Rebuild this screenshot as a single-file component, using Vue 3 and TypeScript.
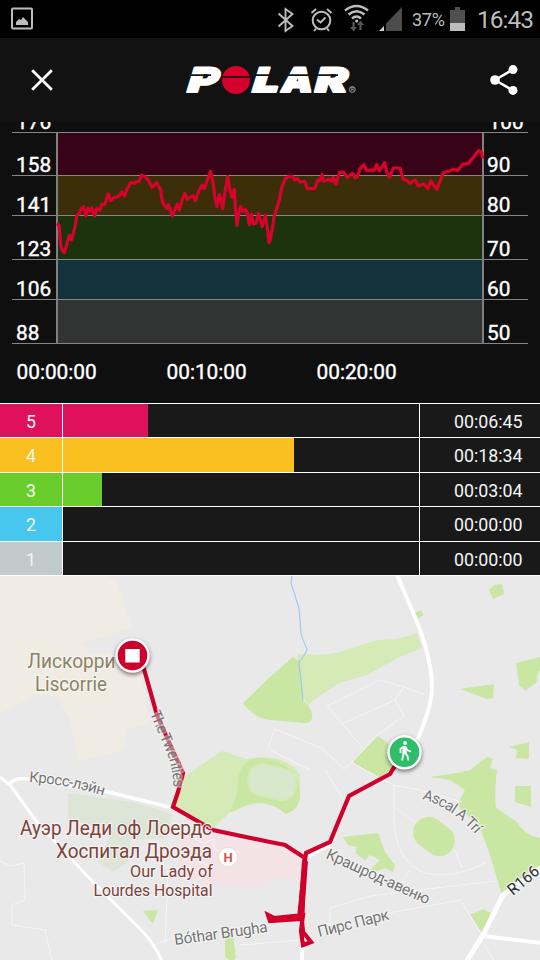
<template>
    <div class="screen">
        <div class="status">
            <svg class="status__icon" width="22" height="24" viewBox="0 0 22 24" fill="none">
                <rect x="1" y="1.500" width="20" height="20" rx="1" stroke="#bdbdbd" stroke-width="2" />
                <path d="M5 18v-3l3-3 2 1 2-3 2 2 3 3v3z" fill="#bdbdbd" />
            </svg>
            <svg class="status__tray" width="140" height="38" viewBox="270 0 140 38" fill="none" stroke="#bdbdbd">
                <path d="M278.500 13.500l14 12.500-7 5V9l7 5-14 12.500" stroke-width="1.900" />
                <circle cx="321.500" cy="20.500" r="8.800" stroke-width="2" />
                <path d="M317 19.500l3.500 3 5-5M311.500 13l4.500-4M331.500 13L327 9M316 28.500l-2 2.500M327 28.500l2 2.500" stroke-width="1.900" />
                <path d="M345 10.500q11.500-9 23 0M348.500 14.500q8-6.500 16 0M352 18.500q4.500-4 9 0" stroke-width="2.500" />
                <circle cx="356.700" cy="21" r="1.600" fill="#bdbdbd" stroke="none" />
                <path d="M353.500 22v6M360.500 24v6" stroke="#565656" stroke-width="2.200" />
                <path d="M350 27h7l-3.500 4.500zM357 25h7l-3.500-4.500z" fill="#565656" stroke="none" />
                <path d="M386 23.500L402 7v24h-16z" fill="#4c4c4c" stroke="none" />
                <path d="M379 31l5-5v5z" fill="#d0d0d0" stroke="none" />
            </svg>
            <span class="status__percent">37%</span>
            <svg class="status__battery" width="15" height="24" viewBox="0 0 15 24">
                <path d="M0 3h5V0h5v3h5v13H0z" fill="#4f4f4f" />
                <path d="M0 16h15v8H0z" fill="#bdbdbd" />
            </svg>
            <span class="status__clock">16:43</span>
        </div>

        <header class="header">
            <svg width="22" height="22" viewBox="0 0 22 22" fill="none" stroke="#fff" stroke-width="2.800">
                <path d="M1.200 1.200l19.600 19.600M20.800 1.200L1.200 20.800" />
            </svg>
            <svg class="header__logo" width="174" height="34" viewBox="184 63 174 34">
                <g class="header__brand">
                    <text transform="translate(185.500 92) skewX(-17)" textLength="30" lengthAdjust="spacingAndGlyphs">P</text>
                    <text transform="translate(250.500 92) skewX(-17)" textLength="26" lengthAdjust="spacingAndGlyphs">L</text>
                    <text transform="translate(280 92) skewX(-10)" textLength="31" lengthAdjust="spacingAndGlyphs">A</text>
                    <text transform="translate(313 92) skewX(-15)" textLength="32" lengthAdjust="spacingAndGlyphs">R</text>
                </g>
                <circle cx="236" cy="80" r="14" fill="#d5002b" />
                <path d="M187 75.200h24M221 77h30M251 75.200h24M288 75.200h22M316 75.200h22" stroke="#121212" stroke-width="1.700" />
                <circle cx="352.300" cy="89.500" r="2.900" fill="none" stroke="#bbb" stroke-width=".8" />
                <text x="352.300" y="91.300" class="header__reg">R</text>
            </svg>
            <svg width="28" height="30" viewBox="0 0 28 30" fill="#fff">
                <path d="M23 4.500L5 15l18 10.500" fill="none" stroke="#fff" stroke-width="2.400" />
                <circle cx="5" cy="15" r="4.800" />
                <circle cx="23" cy="4.600" r="4.500" />
                <circle cx="23" cy="25.400" r="4.500" />
            </svg>
        </header>

        <svg class="chart" width="540" height="281" viewBox="0 122 540 281">
            <rect
                v-for="band in bands"
                :key="band.color"
                x="57"
                :y="band.y"
                width="426"
                :height="band.height"
                :fill="band.color"
            />
            <path v-for="tick in ticks" :key="tick.y" :d="`M12 ${tick.y + 0.5}H528`" stroke="#868686" />
            <path d="M57 132V344M483 132V344" stroke="#808080" stroke-width="2" />
            <g v-for="tick in ticks" :key="tick.bpm">
                <text x="16" :y="tick.y - 3.5">{{ tick.bpm }}</text>
                <text :x="tick.percent === 100 ? 488.5 : 487" :y="tick.y - 3.5">{{ tick.percent }}</text>
            </g>
            <text v-for="(time, i) in times" :key="time" :x="16.5 + i * 150" y="378.700">{{ time }}</text>
            <!-- heart rate samples are stored at a third of a pixel -->
            <polyline
                transform="translate(0 110) scale(.33333)"
                :points="heartRate"
                fill="none"
                stroke="#d8032d"
                stroke-width="9.500"
                stroke-linejoin="round"
            />
        </svg>

        <div class="zones">
            <div v-for="zone in zones" :key="zone.level" class="zone" :style="{ height: zone.height + 'px' }">
                <div class="zone__level" :style="{ background: zone.color }">{{ zone.level }}</div>
                <div class="zone__track">
                    <div class="zone__bar" :style="{ width: zone.width + 'px', background: zone.color }"></div>
                </div>
                <div class="zone__time">{{ zone.time }}</div>
            </div>
        </div>

        <svg class="map" width="540" height="385" viewBox="0 576 540 384">
            <path d="M0 575H104L116 580L133 628L83 643L90 655L138 650L143 683L150 723L127 730L123 750L78 762L70 720L57 697L37 695L0 713Z" fill="#f0ece4" />
            <path d="M68 793L133 802L172 814L167 838L130 840L128 862L113 872L98 862L112 832L68 818Z" fill="#dde5d6" />
            <path d="M180 836L213 832L270 843L304 858L301 878L270 878L263 888L213 885L178 878Z" fill="#f3e2e6" />
            <path d="M298 654Q325 656 340 652L377 640L397 639L417 633L422 648L397 658L367 675L343 682Q325 690 308 705L299 690Z" fill="#d5eab6" />
            <path d="M184 777L222 751L246 759L262 757Q290 758 300 775V800L285 812L230 812L213 829L175 807L178 792Z" fill="#d5eab6" />
            <path d="M230 812Q240 790 238 777Q245 752 272 760Q301 769 300 795Q299 812 284 814Q270 798 246 805Z" fill="#c9e6a2" />
            <rect x="248" y="767" width="48" height="31" rx="14" transform="rotate(14 273 783)" fill="#d8e8cd" stroke="#d5eab6" stroke-width="2" />
            <path d="M226 818Q242 804 260 803Q280 806 286 815L304 850L270 842L213 830Z" fill="#e9e9e9" />
            <g fill="#c9e6a2">
                <path v-for="d in parks" :key="d" :d="d" />
                <rect x="412" y="821" width="44" height="31" rx="15" transform="rotate(38 434 836.500)" />
            </g>

            <g fill="none" stroke="#f5f5f5" stroke-width="1">
                <path v-for="d in lanes" :key="d" :d="d" />
            </g>
            <path d="M292 575L291 583L299 608L301 633Q302 638 307 649Q306 654 299 662L303 700" fill="none" stroke="#9bc4f6" stroke-width="1.100" />
            <g fill="none" stroke="#fff" stroke-linejoin="round">
                <path d="M397 575L415 617C430 653 432 674 432 688C431 709 423 726 416 743" stroke-width="4" />
                <path d="M0 777L10 785L37 822L93 882L143 932Q155 944 162 962" stroke-width="3" />
                <path d="M9 784Q16 777 28 779L100 790L173 808L213 830L285 845L305 858L330 845" stroke-width="3.500" />
                <path d="M304 860L302 962" stroke-width="4" />
                <path d="M542 867L503 895L483 935L466 962" stroke-width="5" />
                <path d="M483 936L542 943" stroke-width="4" />
            </g>

            <g fill="none" stroke="#d0002d" stroke-width="4.200" stroke-linejoin="miter">
                <path d="M142 662L157 715L183 773L178 792L173 807L213 830L270 842L285 845L305 858" />
                <path d="M404 753L393 769L390 774L349 796L330 842L306 853L305 860L299 919L270 921L268 915L274 918L303 915L301 931L303 945L311 942L303 932L302 921L304.500 858" />
                <path d="M305 861L301 916" stroke-width="6" />
            </g>

            <path id="cross-lane" d="M29 782Q65 784 105 796" fill="none" />
            <path id="ascal" d="M422 799Q453 808 477 836" fill="none" />
            <path id="twenties" d="M150 713L166 751Q172 763 174 790" fill="none" />
            <g class="map__street">
                <text font-size="15"><textPath href="#cross-lane" textLength="76">Кросс-лэйн</textPath></text>
                <text font-size="15"><textPath href="#ascal" textLength="65">Ascal A Trí</textPath></text>
                <text font-size="15" class="map__street--over"><textPath href="#twenties" textLength="79">The Twenties</textPath></text>
                <text font-size="15.500" transform="translate(325 858) rotate(24.500)" textLength="112">Крашрод-авеню</text>
                <text font-size="15.500" transform="translate(319 937) rotate(-14)" textLength="73">Пирс Парк</text>
                <text font-size="15.500" transform="translate(175 945) rotate(-8)" textLength="94">Bóthar Brugha</text>
                <text font-size="16" fill="#333" transform="translate(513 896) rotate(-40)" textLength="36" lengthAdjust="spacingAndGlyphs">R166</text>
            </g>
            <g class="map__place" text-anchor="middle">
                <text x="71.500" y="668" textLength="88" lengthAdjust="spacingAndGlyphs">Лискорри</text>
                <text x="71" y="691" textLength="72" lengthAdjust="spacingAndGlyphs">Liscorrie</text>
            </g>
            <g class="map__hospital" text-anchor="end">
                <text x="212" y="834.500" font-size="20" textLength="192" lengthAdjust="spacingAndGlyphs">Ауэр Леди оф Лоердс</text>
                <text x="212" y="857.500" font-size="20" textLength="156" lengthAdjust="spacingAndGlyphs">Хоспитал Дроэда</text>
                <text x="213" y="877" font-size="16.500" textLength="83" lengthAdjust="spacingAndGlyphs">Our Lady of</text>
                <text x="212.500" y="896" font-size="16.500" textLength="119" lengthAdjust="spacingAndGlyphs">Lourdes Hospital</text>
            </g>
            <circle cx="228" cy="857" r="9.500" fill="#fff" stroke="#d8d0d0" stroke-width=".6" />
            <text x="228" y="861.700" class="map__h">H</text>

            <g class="map__pin">
                <circle cx="132.500" cy="655.500" r="17.200" fill="#fff" />
                <circle cx="132.500" cy="655.500" r="14.800" fill="#d0002d" />
                <path d="M125.300 649h14.400v13.400h-14.400z" fill="#fff" />
            </g>
            <g class="map__pin">
                <circle cx="404.500" cy="752.300" r="17.200" fill="#fff" />
                <circle cx="404.500" cy="752.300" r="14.800" fill="#2ebd68" />
                <circle cx="405" cy="743" r="1.900" fill="#fff" />
                <path d="M403.500 746.800L400.500 749V753M405.500 747.500L408 750.500L411 751.500M403.500 754L402 760.500M405 753L407.500 756L408.500 760.500" fill="none" stroke="#fff" stroke-width="1.800" />
                <path d="M402.800 746h3.500l.5 8h-4.500z" fill="#fff" />
            </g>
        </svg>
    </div>
</template>

<script setup lang="ts">
interface Tick {
    y: number
    bpm: number
    percent: number
}

interface Zone {
    level: number
    color: string
    width: number
    time: string
    height: number
}

const ticks: Tick[] = [
    { y: 132, bpm: 176, percent: 100 },
    { y: 175, bpm: 158, percent: 90 },
    { y: 215, bpm: 141, percent: 80 },
    { y: 259, bpm: 123, percent: 70 },
    { y: 299, bpm: 106, percent: 60 },
    { y: 343, bpm: 88, percent: 50 },
]

const bandColors = ['#390317', '#3d2e0a', '#1d330e', '#14323c', '#323333']
const bands = bandColors.map((color, i) => ({
    color,
    y: ticks[i].y,
    height: ticks[i + 1].y - ticks[i].y,
}))

const times = ['00:00:00', '00:10:00', '00:20:00']

const zones: Zone[] = [
    { level: 5, color: '#e0115c', width: 85, time: '00:06:45', height: 34 },
    { level: 4, color: '#f9c01f', width: 231, time: '00:18:34', height: 35 },
    { level: 3, color: '#69ce2b', width: 39, time: '00:03:04', height: 34 },
    { level: 2, color: '#48c7ee', width: 0, time: '00:00:00', height: 35 },
    { level: 1, color: '#c1cbca', width: 0, time: '00:00:00', height: 34 },
]

const heartRate = `170,342 177,345 182,405 187,422 193,428 200,405 208,376 214,390 220,370 226,345
    230,318 238,310 242,300 250,290 258,318 264,294 272,304 276,294 284,318 290,296 300,300 306,284
    314,284 325,252 332,272 342,262 350,262 358,256 366,246 374,258 382,236 392,218 404,220 412,214
    418,214 424,196 436,200 444,210 456,232 470,218 482,240 488,278 500,296 506,284 517,318 526,296
    532,282 538,300 546,272 554,250 562,268 570,262 580,258 586,272 596,244 606,226 613,236 622,210
    632,184 640,222 644,258 651,290 658,254 663,266 668,296 676,240 683,200 690,240 696,262 703,238
    706,290 711,346 718,300 722,290 728,304 736,298 742,310 748,344 754,312 760,342 768,340 776,310
    786,350 796,316 803,360 807,398 810,392 818,350 822,320 832,290 838,270 846,230 856,206 866,200
    878,200 884,210 892,206 900,216 914,214 922,236 932,236 944,236 954,210 960,212 966,194 972,214
    986,208 994,214 1000,202 1008,224 1018,188 1030,186 1042,202 1050,196 1058,190 1066,204 1072,200
    1080,176 1092,164 1100,182 1114,180 1122,182 1130,164 1138,182 1154,158 1160,184 1168,202
    1180,174 1200,174 1210,208 1222,212 1230,220 1244,210 1256,228 1272,222 1284,236 1292,212
    1300,224 1310,238 1320,214 1330,188 1346,184 1360,178 1372,182 1390,162 1406,160 1420,142
    1436,122 1444,126 1449,146`

const parks = [
    'M243 703L270 677L293 657L299 661L303 700L308 705Q318 722 305 723L270 720Q255 719 243 703Z',
    'M489 590L494 585L502 584L504 594L493 599Z',
    'M413 613L421 610.500L423.500 615L416 620Z',
    'M460 689L494 684L493 698L487 699Z',
    'M516 663L540 657V670L537 675V682L525 691L519 685Z',
    'M509 747L529 742V759L516 758L517 750Z',
    'M430 777L457 773L470 770L487 757L493 759L490 768L497 770Q494 795 496 808L517 822Q525 836 540 838V866L517 882L502 895L490 855L480 828L457 805L465 790L450 780Z',
    'M515 786H531V807L515 802Z',
    'M343 837L378 833L385 852L395 865L393 872L385 868L375 872L370 870L380 860L370 855L365 860L355 853L357 847L348 845Z',
    'M470 915L483 909L494 915L482 933Z',
    'M353 761L378 736L390 745L395 766L380 778L357 765Z',
    'M143 911L158 910L153 924Z',
    'M225 933L233 936L236 958L232 962L225 957Z',
]

const lanes = [
    'M327 706L380 680L404 687L395 699L404 716L376 736L353 761L344 769L323 749L275 729L268 748',
    'M327 706L363 748M342 724L397 699M404 687L424 694M270 750L310 770',
    'M352 763L393 785L420 790L462 802M325 770L343 799',
    'M394 785V820Q396 863 425 873Q455 880 487 862M394 807L415 822M455 850L462 868',
    'M330 927V908L370 896L495 881M462 902L482 935M360 918L461 900M410 870L400 885',
    'M0 861L10 866L24 863L25 900L12 905V925L45 930L52 960',
    'M168 870L165 945M155 945L180 935M240 945L302 940M480 938L495 962',
    'M188 848L198 850V862L211 866M192 838L205 843L213 839L215 850L240 852',
]
</script>

<style>
body {
    background: #0f0f0f;
}
</style>

<style scoped>
.screen {
    display: flex;
    flex-direction: column;
    width: 540px;
    height: 960px;
    overflow: hidden;
    background: #0f0f0f;
    font-family: Roboto, 'Noto Sans', sans-serif;
}

.screen svg {
    display: block;
    flex: none;
}

.status {
    display: flex;
    flex: none;
    align-items: center;
    height: 38px;
    padding: 0 8px 0 11px;
    background: #000;
    color: #bdbdbd;
}

.status__tray {
    margin-left: auto;
}

.status__percent {
    width: 34px;
    margin-left: 2px;
    font-size: 18px;
    line-height: 38px;
    padding-top: 1px;
    letter-spacing: -0.3px;
}

.status__battery {
    margin: 0 12px 0 4px;
}

.status__clock {
    width: 55px;
    font-size: 24.5px;
    line-height: 38px;
    padding-top: 1px;
    letter-spacing: -1px;
    white-space: nowrap;
}

.header {
    display: flex;
    flex: none;
    align-items: center;
    justify-content: space-between;
    height: 84px;
    padding: 0 22px 0 31px;
    background: #121212;
}

.header__logo {
    margin-left: -1px;
    overflow: visible;
}

.header__brand {
    fill: #fff;
    stroke: #fff;
    stroke-width: 2.2px;
    stroke-linejoin: round;
    font-family: Inter, Roboto, sans-serif;
    font-size: 33.5px;
    font-weight: 900;
}

.header__reg {
    fill: #bbb;
    font-size: 5px;
    text-anchor: middle;
}

.chart text {
    fill: #fff;
    stroke: #fff;
    stroke-width: 0.4px;
    font-size: 20.8px;
}

.zones {
    flex: none;
    background: #191919;
}

.zone {
    display: flex;
    box-sizing: border-box;
    border-top: 1px solid #fff;
    color: #f4f4f4;
    font-size: 17.8px;
    line-height: 35px;
}

.zone__level {
    width: 62px;
    overflow: hidden;
    text-align: center;
}

.zone__track {
    width: 356px;
    border-right: 1px solid #fff;
    border-left: 1px solid #fff;
}

.zone__bar {
    height: 100%;
}

.zone__time {
    flex: 1;
    padding-right: 17.5px;
    text-align: right;
}

.map {
    box-sizing: border-box;
    border-top: 1px solid #fff;
    background: #e9e9e9;
}

.map text {
    paint-order: stroke;
    stroke: rgba(245, 245, 245, 0.85);
    stroke-width: 2.5px;
    stroke-linejoin: round;
}

.map__street {
    fill: #757575;
}

.map .map__street--over {
    stroke: rgba(240, 240, 240, 0.45);
    stroke-width: 4px;
}

.map__place {
    fill: #8b835f;
    font-size: 20.5px;
}

.map__hospital {
    fill: #7d433b;
}

.map .map__h {
    fill: #d4544a;
    stroke: none;
    font-size: 13px;
    font-weight: 700;
    text-anchor: middle;
}

.map__pin {
    filter: drop-shadow(0 2px 2px rgba(0, 0, 0, 0.5));
}
</style>
